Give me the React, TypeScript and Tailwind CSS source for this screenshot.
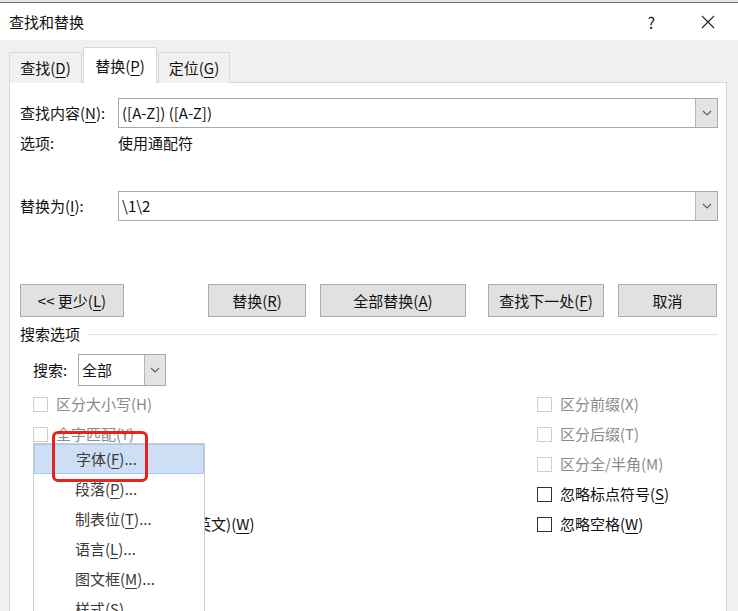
import React from 'react';

const U: React.FC<{ children: React.ReactNode }> = ({ children }) => (
  <span className="underline underline-offset-[3px] decoration-1">{children}</span>
);

const Chevron: React.FC = () => (
  <svg width="10" height="6" viewBox="0 0 10 6" className="block">
    <path d="M1 1 L5 5 L9 1" fill="none" stroke="#606060" strokeWidth="1.2" />
  </svg>
);

const ComboBox: React.FC<{ value: string; className?: string }> = ({ value, className }) => (
  <div className={`flex h-[30px] border border-[#a9a9a9] bg-white ${className ?? ''}`}>
    <div className="flex-1 flex items-center pl-[3px] text-[15px] text-[#111]">{value}</div>
    <div className="w-[22px] flex items-center justify-center bg-[#e3e3e3] border-l border-[#b5b5b5]">
      <Chevron />
    </div>
  </div>
);

const Button: React.FC<{ w: string; children: React.ReactNode }> = ({ w, children }) => (
  <div className={`${w} h-[33px] flex items-center justify-center bg-[#e1e1e1] border border-[#adadad] text-[15px] text-[#111]`}>
    {children}
  </div>
);

const Check: React.FC<{ label: React.ReactNode; disabled?: boolean }> = ({ label, disabled }) => (
  <div className="h-[30px] flex items-center gap-[8px] whitespace-nowrap">
    <div className={`w-[15px] h-[15px] bg-white border ${disabled ? 'border-[#cfcfcf]' : 'border-[#333]'}`} />
    <span className={`text-[15px] ${disabled ? 'text-[#8a8a8a]' : 'text-[#111]'}`}>{label}</span>
  </div>
);

const menuItems: React.ReactNode[] = [
  <>字体(<U>F</U>)...</>,
  <>段落(<U>P</U>)...</>,
  <>制表位(<U>T</U>)...</>,
  <>语言(<U>L</U>)...</>,
  <>图文框(<U>M</U>)...</>,
  <>样式(<U>S</U>)...</>,
];

export default function App() {
  return (
    <div className="relative w-[738px] h-[611px] overflow-hidden bg-[#f0f0f0] font-['Microsoft_YaHei','Noto_Sans_CJK_SC',sans-serif] text-[15px] leading-[20px] text-[#111]">
      {/* window top edge */}
      <div className="h-[2px] bg-[#e8e8e8]" />
      <div className="h-px bg-[#6e6e6e]" />

      {/* title bar */}
      <div className="h-[37px] bg-white flex items-center pl-[9px]">
        <span className="text-[15px]">查找和替换</span>
        <span className="ml-auto mr-[46px] text-[16px] text-[#222]">?</span>
        <svg width="14" height="14" viewBox="0 0 14 14" className="mr-[23px]">
          <path d="M1 1 L13 13 M13 1 L1 13" stroke="#222" strokeWidth="1.1" />
        </svg>
      </div>

      <div className="pl-[9px] pr-[11px]">
        {/* tabs */}
        <div className="flex items-end h-[42px] pt-[7px]">
          <div className="w-[73px] h-[31px] flex items-center justify-center bg-[#f0f0f0] border border-b-0 border-[#d9d9d9] mb-[-1px]">
            查找(<U>D</U>)
          </div>
          <div className="w-[74px] h-[36px] flex items-center justify-center bg-white border border-b-0 border-[#d9d9d9] mb-[-1px] relative z-10 ml-[1px]">
            替换(<U>P</U>)
          </div>
          <div className="w-[72px] h-[31px] flex items-center justify-center bg-[#f0f0f0] border border-b-0 border-[#d9d9d9] mb-[-1px] ml-[1px]">
            定位(<U>G</U>)
          </div>
        </div>

        {/* tab panel */}
        <div className="h-[540px] bg-white border border-[#d9d9d9] pl-[10px] pr-[8px]">
          <div className="mt-[15px] flex items-center">
            <div className="w-[98px]">查找内容(<U>N</U>):</div>
            <ComboBox value="([A-Z]) ([A-Z])" className="flex-1" />
          </div>
          <div className="mt-[5px] flex items-center h-[20px]">
            <div className="w-[98px]">选项:</div>
            <div>使用通配符</div>
          </div>

          <div className="mt-[38px] flex items-center">
            <div className="w-[98px]">替换为(<U>I</U>):</div>
            <ComboBox value="\1\2" className="flex-1" />
          </div>

          <div className="mt-[63px] flex">
            <Button w="w-[104px]">&lt;&lt; 更少(<U>L</U>)</Button>
            <div className="ml-[84px]">
              <Button w="w-[98px]">替换(<U>R</U>)</Button>
            </div>
            <div className="ml-[14px]">
              <Button w="w-[146px]">全部替换(<U>A</U>)</Button>
            </div>
            <div className="ml-[22px]">
              <Button w="w-[116px]">查找下一处(<U>F</U>)</Button>
            </div>
            <div className="ml-[14px]">
              <Button w="w-[99px]">取消</Button>
            </div>
          </div>

          <div className="mt-[7px] flex items-center h-[20px]">
            <span>搜索选项</span>
            <div className="flex-1 h-px bg-[#e0e0e0] ml-[8px]" />
          </div>

          <div className="mt-[10px] ml-[13px] flex items-center">
            <span className="w-[45px]">搜索:</span>
            <div className="flex h-[32px] w-[88px] border border-[#a9a9a9] bg-white">
              <div className="flex-1 flex items-center pl-[3px]">全部</div>
              <div className="w-[21px] flex items-center justify-center bg-[#e3e3e3] border-l border-[#b5b5b5]">
                <Chevron />
              </div>
            </div>
          </div>

          <div className="mt-[3px] ml-[13px] flex">
            <div className="w-[504px] flex flex-col">
              <Check label="区分大小写(H)" disabled />
              <Check label="全字匹配(Y)" disabled />
              <Check label={<>使用通配符(<U>U</U>)</>} />
              <Check label={<>同音(英文)(<U>K</U>)</>} />
              <Check label={<>查找单词的所有形式(英文)(<U>W</U>)</>} />
            </div>
            <div className="flex flex-col">
              <Check label="区分前缀(X)" disabled />
              <Check label="区分后缀(T)" disabled />
              <Check label="区分全/半角(M)" disabled />
              <Check label={<>忽略标点符号(<U>S</U>)</>} />
              <Check label={<>忽略空格(<U>W</U>)</>} />
            </div>
          </div>
        </div>
      </div>

      {/* context menu overlay */}
      <div className="absolute left-[33px] top-[443px] w-[172px] h-[200px] bg-white border border-[#cccccc] z-20">
        {menuItems.map((item, i) => (
          <div
            key={i}
            className={`h-[30px] flex items-center pl-[41px] text-[15px] text-[#3a3a3a] ${
              i === 0 ? 'bg-[#cddff5] border border-[#aac8ec]' : ''
            }`}
          >
            {item}
          </div>
        ))}
      </div>

      {/* red highlight annotation */}
      <div className="absolute left-[52px] top-[431px] w-[96px] h-[51px] border-[3px] border-[#e5231b] rounded-[6px] z-30" />
    </div>
  );
}
